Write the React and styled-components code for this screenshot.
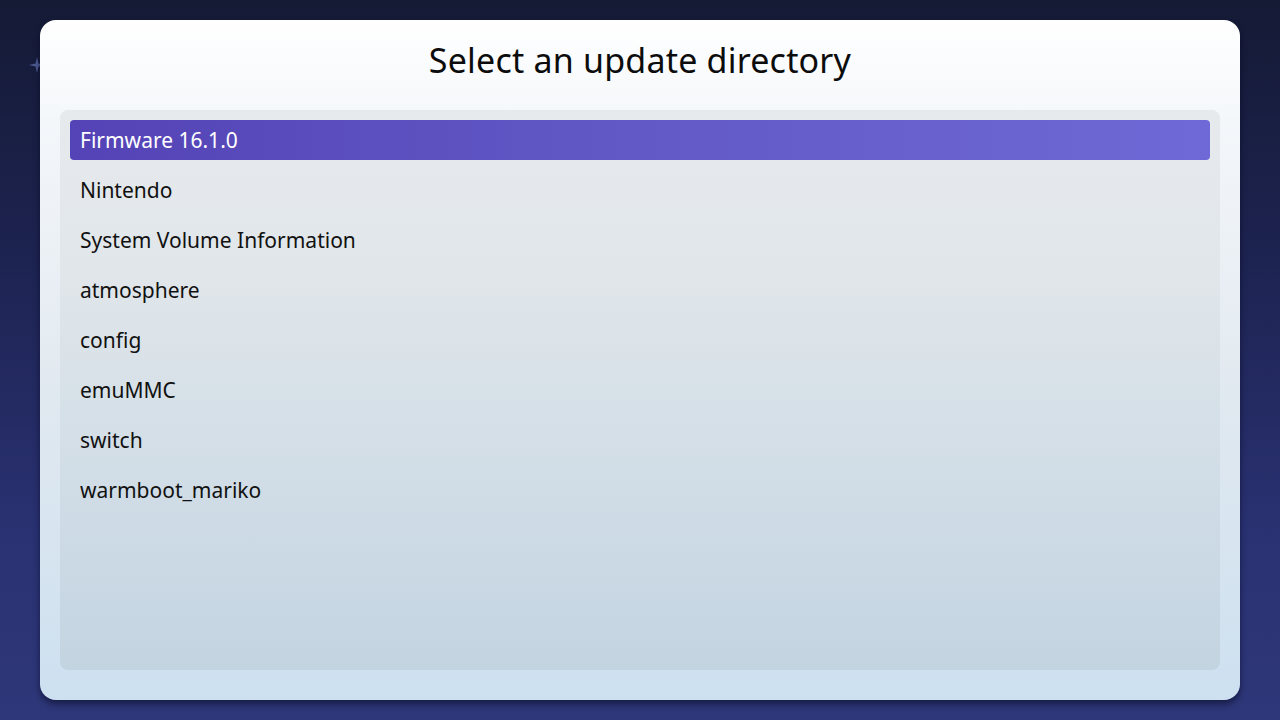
import React from "react";
import styled, { createGlobalStyle } from "styled-components";

const Global = createGlobalStyle`
  html, body { margin: 0; padding: 0; }
  body {
    width: 1280px;
    height: 720px;
    overflow: hidden;
    font-family: "Noto Sans", "Open Sans", sans-serif;
  }
`;

const Screen = styled.div`
  position: relative;
  width: 1280px;
  height: 720px;
  box-sizing: border-box;
  padding: 20px 40px;
  background: linear-gradient(180deg, #151a35 0%, #1d2350 35%, #2a3273 75%, #2e3779 100%);
  display: flex;
`;

const Sparkle = styled.div`
  position: absolute;
  left: 29px;
  top: 56px;
  width: 16px;
  height: 16px;
  color: #5a6aa8;
  opacity: 0.8;
`;

const Dialog = styled.div`
  position: relative;
  flex: 1;
  border-radius: 16px;
  background: linear-gradient(180deg, #ffffff 0%, #f4f7fa 15%, #e1e9f0 55%, #cde0f0 100%);
  box-shadow: 0 4px 6px rgba(5, 8, 30, 0.55);
  display: flex;
  flex-direction: column;
  padding: 0 20px 30px;
`;

const Title = styled.h1`
  margin: 0 0 10px;
  height: 80px;
  display: flex;
  align-items: center;
  justify-content: center;
  font-family: "Noto Sans", "Open Sans", sans-serif;
  font-weight: 400;
  font-size: 34px;
  color: #0c0c0c;
  letter-spacing: 0.2px;
`;

const Panel = styled.div`
  flex: 1;
  border-radius: 8px;
  background: linear-gradient(180deg, #e7eaed 0%, #e0e6ea 30%, #cfdce6 70%, #c3d4e1 100%);
  padding: 10px;
  display: flex;
  flex-direction: column;
  gap: 10px;
`;

const Row = styled.div`
  height: 40px;
  display: flex;
  align-items: center;
  padding: 0 10px;
  border-radius: 4px;
  font-size: 21px;
  color: ${(p) => (p.$selected ? "#ffffff" : "#111111")};
  background: ${(p) =>
    p.$selected ? "linear-gradient(90deg, #5443b6 0%, #6259c6 50%, #6e69d6 100%)" : "transparent"};
`;

const items = [
  "Firmware 16.1.0",
  "Nintendo",
  "System Volume Information",
  "atmosphere",
  "config",
  "emuMMC",
  "switch",
  "warmboot_mariko",
];

export default function App() {
  return (
    <>
      <Global />
      <Screen>
        <Sparkle>
          <svg width="16" height="16" viewBox="0 0 16 16">
            <path d="M8 0 L9.5 6.5 L16 8 L9.5 9.5 L8 16 L6.5 9.5 L0 8 L6.5 6.5 Z" fill="currentColor" />
          </svg>
        </Sparkle>
        <Dialog>
          <Title>Select an update directory</Title>
          <Panel>
            {items.map((it, i) => (
              <Row key={it} $selected={i === 0}>
                {it}
              </Row>
            ))}
          </Panel>
        </Dialog>
      </Screen>
    </>
  );
}
